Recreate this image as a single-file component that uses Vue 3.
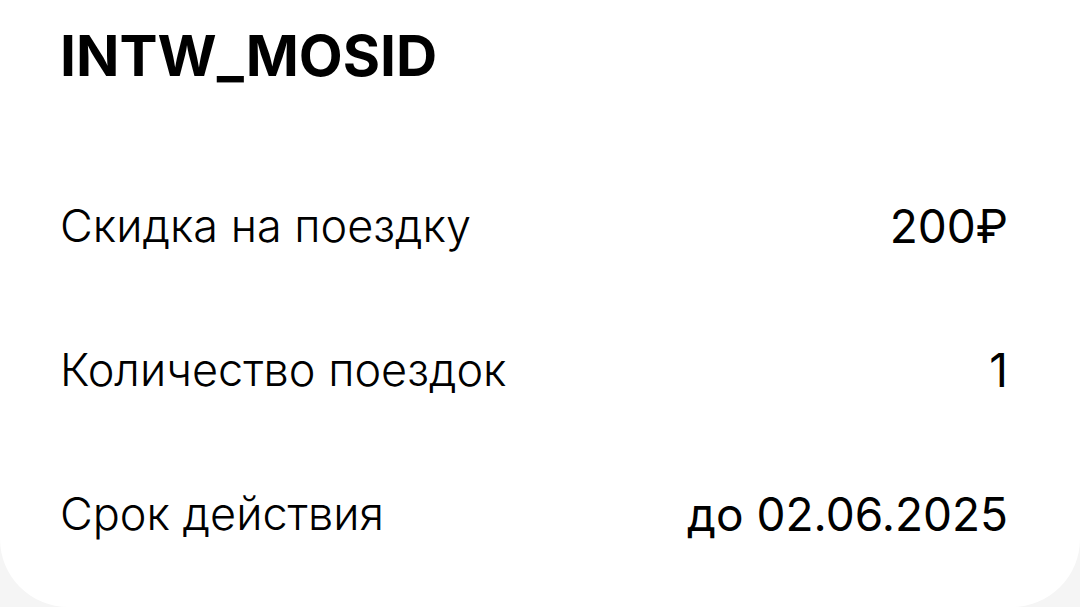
<template>
  <main class="promo-page">
    <section class="promo-card">
      <h1 class="promo-code">{{ code }}</h1>
      <dl class="details">
        <div v-for="row in rows" :key="row.label" class="details-row">
          <dt class="details-label">{{ row.label }}</dt>
          <dd class="details-value">{{ row.value }}</dd>
        </div>
      </dl>
    </section>
  </main>
</template>

<script setup>
import { ref } from 'vue';

const code = ref('INTW_MOSID');

const rows = ref([
  { label: 'Скидка на поездку', value: '200₽' },
  { label: 'Количество поездок', value: '1' },
  { label: 'Срок действия', value: 'до 02.06.2025' }
]);
</script>

<style>
body { margin: 0; background-color: #f5f5f5; }
</style>

<style scoped>
.promo-page { font-family: Inter, "Noto Sans", sans-serif; color: #000; }
.promo-card { box-sizing: border-box; padding: 20px 72px 21px 60px; background-color: #fff; border-radius: 0 0 68px 68px; }
.promo-code { margin: 0 0 62px; font-size: 57px; line-height: 72px; font-weight: 700; }
.details { margin: 0; display: flex; flex-direction: column; }
.details-row { display: flex; justify-content: space-between; align-items: center; gap: 24px; min-height: 144px; }
.details-label { font-size: 45px; line-height: 56px; font-weight: 300; }
.details-value { margin: 0; font-size: 46px; line-height: 56px; font-weight: 400; text-align: right; }
</style>
